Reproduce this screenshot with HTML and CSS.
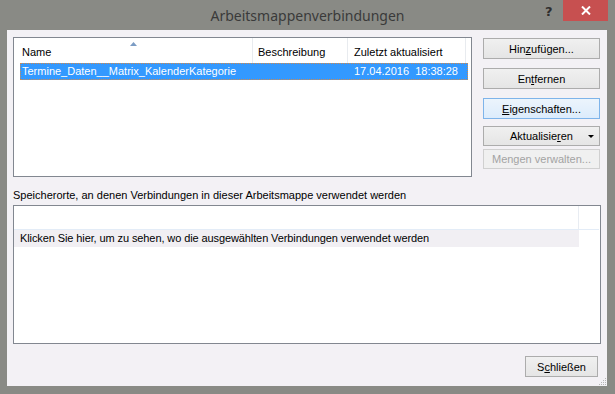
FILE: index.html
```html
<!DOCTYPE html>
<html lang="de">
<head>
    <meta charset="UTF-8">
    <title>Arbeitsmappenverbindungen</title>
    <link rel="stylesheet" href="styles.css">
</head>
<body>
<div class="window">
    <div class="titlebar">
        <span></span>
        <div class="title">Arbeitsmappenverbindungen</div>
        <div class="controls">
            <span class="help">?</span>
            <span class="close">
                <svg width="10" height="9" viewBox="0 0 10 9"><path d="M1 0.5 L9 8.5 M9 0.5 L1 8.5" stroke="#fff" stroke-width="2"/></svg>
            </span>
        </div>
    </div>
    <div class="client">
        <div class="top">
            <div class="list conn-list">
                <div class="list-head">
                    <div class="col col-name">Name
                        <svg class="sort" width="7" height="4" viewBox="0 0 7 4"><polygon points="0,4 3.5,0 7,4" fill="#7b9cc4"/></svg>
                    </div>
                    <div class="col col-desc">Beschreibung</div>
                    <div class="col col-date">Zuletzt aktualisiert</div>
                    <div class="col col-rest"></div>
                </div>
                <div class="row selected">
                    <div class="cell cell-name">Termine_Daten__Matrix_KalenderKategorie</div>
                    <div class="cell cell-desc"></div>
                    <div class="cell cell-date">17.04.2016&nbsp;&nbsp;18:38:28</div>
                </div>
            </div>
            <div class="btns">
                <button class="btn">Hin<u>z</u>ufügen...</button>
                <button class="btn">En<u>t</u>fernen</button>
                <button class="btn focus"><u>E</u>igenschaften...</button>
                <button class="btn split">Aktualisie<u>r</u>en <span class="caret"></span></button>
                <button class="btn disabled">Mengen verwalten...</button>
            </div>
        </div>
        <div class="label">Speicherorte, an denen Verbindungen in dieser Arbeitsmappe verwendet werden</div>
        <div class="list use-list">
            <div class="use-head">
                <div class="use-col"></div>
            </div>
            <div class="use-row">Klicken Sie hier, um zu sehen, wo die ausgewählten Verbindungen verwendet werden</div>
        </div>
        <div class="footer">
            <button class="btn close-btn">S<u>c</u>hließen</button>
            <svg class="grip" width="8" height="9" viewBox="0 0 8 9">
                <rect x="6" y="1" width="1" height="1" fill="#b5b5b5"/>
                <rect x="4" y="3" width="1" height="1" fill="#b5b5b5"/>
                <rect x="6" y="3" width="1" height="1" fill="#b5b5b5"/>
                <rect x="2" y="5" width="1" height="1" fill="#b5b5b5"/>
                <rect x="4" y="5" width="1" height="1" fill="#b5b5b5"/>
                <rect x="6" y="5" width="1" height="1" fill="#b5b5b5"/>
                <rect x="0" y="7" width="1" height="1" fill="#b5b5b5"/>
                <rect x="2" y="7" width="1" height="1" fill="#b5b5b5"/>
                <rect x="4" y="7" width="1" height="1" fill="#b5b5b5"/>
                <rect x="6" y="7" width="1" height="1" fill="#b5b5b5"/>
            </svg>
        </div>
    </div>
</div>
</body>
</html>
```

FILE: styles.css
```css
*{margin: 0;padding: 0;box-sizing: border-box;}
body {
    background: #898a85;
    width: 615px;
    height: 394px;
    overflow: hidden;
    font-family: "Liberation Sans", Arial, sans-serif;
    font-size: 11px;
    color: #000;
}
.window {
    display: flex;
    flex-direction: column;
    height: 394px;
}
/*========title bar========*/
.titlebar {
    height: 30px;
    display: grid;
    grid-template-columns: 1fr auto 1fr;
}
.title {
    font-family: "Noto Sans", "Open Sans", sans-serif;
    font-size: 14px;
    line-height: 32px;
    color: #3a3a3a;
}
.controls {
    justify-self: end;
    display: flex;
    align-items: flex-start;
    margin-right: 7px;
}
.help {
    font-family: "DejaVu Sans", sans-serif;
    font-weight: bold;
    font-size: 13px;
    color: #2e2e2e;
    width: 12px;
    line-height: 24px;
    margin-right: 6px;
}
.close {
    width: 45px;
    height: 21px;
    background: #c75050;
    display: flex;
    align-items: center;
    justify-content: center;
}
/*========client area========*/
.client {
    height: 356px;
    margin: 0 8px 0 7px;
    background: #f3f1f5;
    padding: 7px 6px 9px 6px;
    display: flex;
    flex-direction: column;
}
.top {
    display: flex;
    gap: 11px;
    height: 140px;
}
.list {
    background: #fff;
    border: 1px solid #828790;
}
.conn-list {
    width: 459px;
    height: 140px;
}
.list-head {
    display: flex;
    height: 25px;
}
.col {
    position: relative;
    padding-top: 8px;
    line-height: 13px;
    border-right: 1px solid #e8ebef;
    white-space: nowrap;
}
.col-name { width: 239px; padding-left: 8px; }
.col-desc { width: 95px; padding-left: 5px; }
.col-date { width: 118px; padding-left: 6px; }
.col-rest { flex: 1; border-right: none; }
.sort {
    position: absolute;
    left: 116px;
    top: 4px;
}
.row {
    display: flex;
    height: 17px;
    margin-left: 6px;
    width: 448px;
    line-height: 15px;
    white-space: nowrap;
}
.row.selected {
    background: #3399ff;
    color: #fff;
    border: 1px dotted #d3894b;
}
.cell-name { width: 232px; padding-left: 1px; }
.cell-desc { width: 95px; }
.cell-date { padding-left: 6px; }
/*========buttons========*/
.btns {
    width: 117px;
    margin-top: 1px;
    display: flex;
    flex-direction: column;
}
.btn {
    font-family: "Liberation Sans", Arial, sans-serif;
    font-size: 11px;
    color: #000;
    height: 21px;
    border: 1px solid #acacac;
    background: linear-gradient(#f0f0f0, #e5e5e5);
    margin-bottom: 9px;
}
.btn u {
    text-decoration: underline;
}
.btn.focus {
    border-color: #7eb4ea;
    background: linear-gradient(#ecf4fc, #dcecfc);
    margin-bottom: 7px;
}
.btn.split {
    height: 20px;
    margin-bottom: 3px;
    position: relative;
}
.caret {
    position: absolute;
    right: 5px;
    top: 8px;
    border-left: 3px solid transparent;
    border-right: 3px solid transparent;
    border-top: 3px solid #000;
}
.btn.disabled {
    height: 20px;
    color: #a3a3a3;
    border-color: #d0d0d0;
    background: #f0f0f0;
    margin-bottom: 0;
}
/*========usage list========*/
.label {
    height: 28px;
    padding-top: 12px;
    line-height: 13px;
    white-space: nowrap;
}
.use-list {
    height: 139px;
}
.use-head {
    height: 24px;
    border-bottom: 1px solid #e3ecf7;
    margin-right: 1px;
}
.use-col {
    width: 565px;
    height: 23px;
    border-right: 1px solid #e8ecf2;
}
.use-row {
    width: 565px;
    height: 17px;
    background: #f1eff3;
    padding-left: 6px;
    line-height: 17px;
    white-space: nowrap;
    letter-spacing: -0.1px;
}
/*========footer========*/
.footer {
    display: flex;
    justify-content: flex-end;
    align-items: flex-end;
    margin-top: 12px;
    height: 21px;
}
.close-btn {
    width: 73px;
    margin: 0 1px 0 0;
}
.grip {
    margin: 0 -6px -9px 0;
    flex-shrink: 0;
}
```
